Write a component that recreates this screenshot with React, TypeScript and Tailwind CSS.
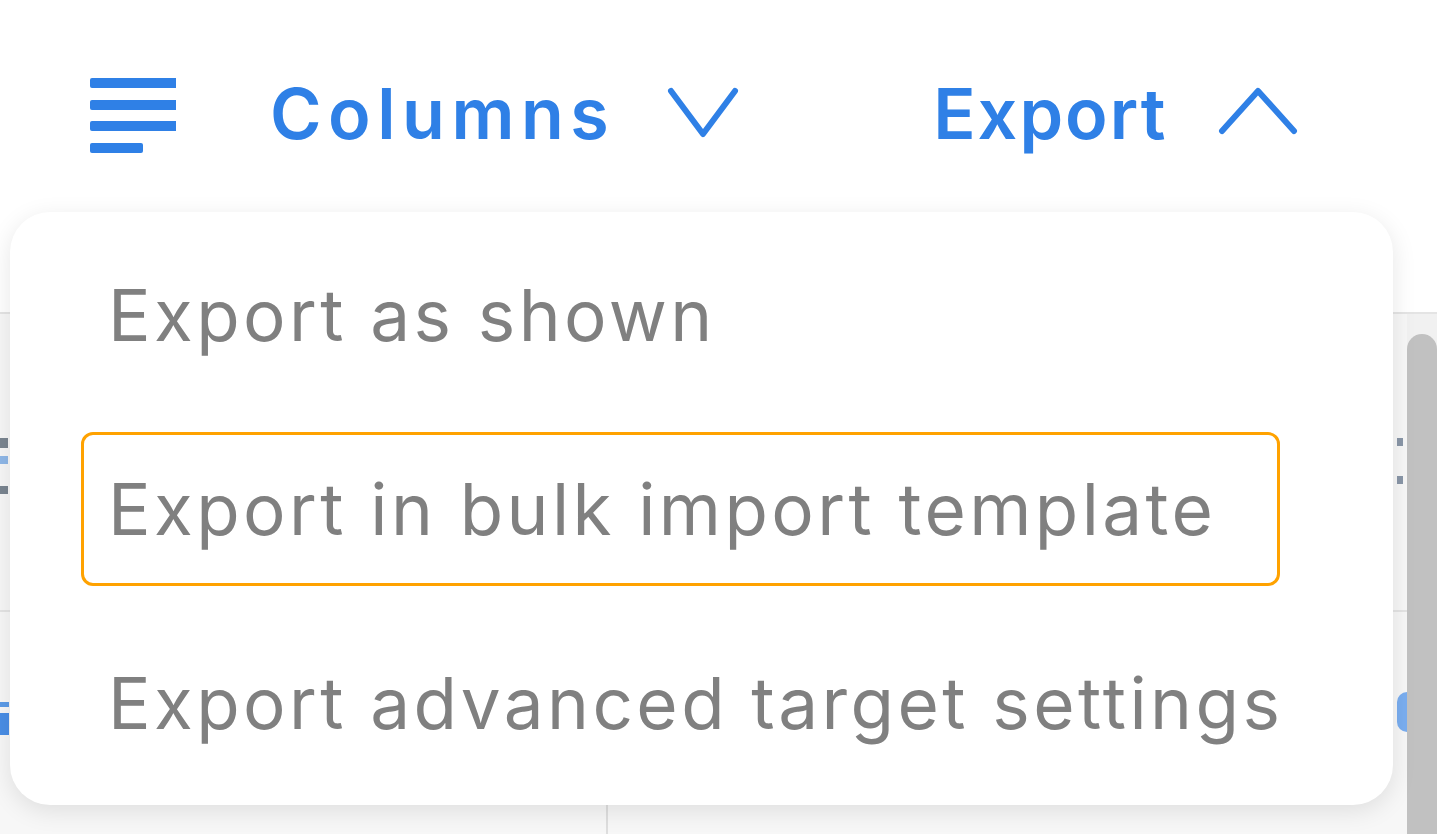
import React from "react";

const BLUE = "#2f80e6";

function Hamburger() {
  return (
    <svg width="90" height="80" viewBox="0 0 90 80" className="shrink-0">
      <g fill={BLUE}>
        <rect x="4" y="2" width="88" height="10" rx="2" />
        <rect x="4" y="24" width="88" height="10" rx="2" />
        <rect x="4" y="45" width="88" height="10" rx="2" />
        <rect x="4" y="67" width="53" height="10" rx="2" />
      </g>
    </svg>
  );
}

function ChevronDown() {
  return (
    <svg width="72" height="52" viewBox="0 0 72 52" className="shrink-0">
      <polyline points="4,4 36,47 68,4" fill="none" stroke={BLUE} strokeWidth="6" strokeLinecap="round" strokeLinejoin="round" />
    </svg>
  );
}

function ChevronUp() {
  return (
    <svg width="80" height="50" viewBox="0 0 80 50" className="shrink-0">
      <polyline points="4,45 40,5 76,45" fill="none" stroke={BLUE} strokeWidth="6" strokeLinecap="round" strokeLinejoin="round" />
    </svg>
  );
}

export default function App() {
  return (
    <div
      className="relative w-[1437px] h-[834px] overflow-hidden bg-white flex flex-col"
      style={{ fontFamily: "Inter, 'Noto Sans', sans-serif" }}
    >
      {/* toolbar */}
      <div className="h-[312px] shrink-0 flex items-start pt-[76px] pl-[86px]">
        <Hamburger />
        <div className="ml-[94px] mt-[-2px] flex items-center">
          <span className="whitespace-nowrap text-[70px] leading-[80px] font-semibold text-[#2f80e6] tracking-[6.5px]">Columns</span>
          <div className="ml-[52px] mt-[-2px]"><ChevronDown /></div>
        </div>
        <div className="ml-[194px] mt-[-2px] flex items-center">
          <span className="whitespace-nowrap text-[70px] leading-[80px] font-semibold text-[#2f80e6] tracking-[2px]">Export</span>
          <div className="ml-[51px] mt-[-6px]"><ChevronUp /></div>
        </div>
      </div>

      {/* table behind */}
      <div className="flex-1 flex bg-[#f7f7f7] border-t-2 border-[#e4e4e4]">
        <div className="flex-1 flex flex-col">
          <div className="h-[298px] border-b-2 border-[#e4e4e4] flex justify-between items-start pt-[124px]">
            <div className="flex flex-col gap-[8px]">
              <div className="w-[8px] h-[10px] bg-[#7a8590]" />
              <div className="w-[8px] h-[8px] bg-[#8fb8e8]" />
              <div className="w-[8px] h-[8px] bg-[#7a8590] mt-[14px]" />
            </div>
            <div className="flex flex-col gap-[30px] mr-[4px]">
              <div className="w-[6px] h-[8px] bg-[#8a97a8]" />
              <div className="w-[6px] h-[8px] bg-[#8a97a8]" />
            </div>
          </div>
          <div className="flex-1 flex">
            <div className="w-[608px] border-r-2 border-[#dedede] flex justify-start items-start pt-[90px]">
              <div className="flex flex-col gap-[6px]">
                <div className="w-[9px] h-[5px] bg-[#5b9be8]" />
                <div className="w-[9px] h-[22px] bg-[#4a8ee6]" />
              </div>
            </div>
            <div className="flex-1 flex justify-end items-start pt-[80px]">
              <div className="w-[10px] h-[40px] rounded-l-full bg-[#7aaef0]" />
            </div>
          </div>
        </div>
        {/* scrollbar */}
        <div className="w-[30px] shrink-0 pt-[20px] bg-[#f1f1f1]">
          <div className="w-full h-full rounded-t-[15px] bg-[#c1c1c1]" />
        </div>
      </div>

      {/* dropdown menu */}
      <div className="absolute left-[10px] top-[212px] w-[1383px] h-[593px] rounded-[40px] bg-white shadow-[0_6px_24px_rgba(0,0,0,0.10)] flex flex-col pt-[26px] gap-[40px]">
        {[
          "Export as shown",
          "Export in bulk import template",
          "Export advanced target settings",
        ].map((t, i) => (
          <div
            key={t}
            className={
              i === 1
                ? "ml-[71px] w-[1199px] h-[154px] flex items-center pl-[24px] rounded-[12px] border-[3px] border-[#ffa200]"
                : "ml-[71px] w-[1199px] h-[154px] flex items-center pl-[27px]"
            }
          >
            <span className="whitespace-nowrap text-[71px] leading-[80px] text-[#808080] tracking-[3.4px]">{t}</span>
          </div>
        ))}
      </div>
    </div>
  );
}
